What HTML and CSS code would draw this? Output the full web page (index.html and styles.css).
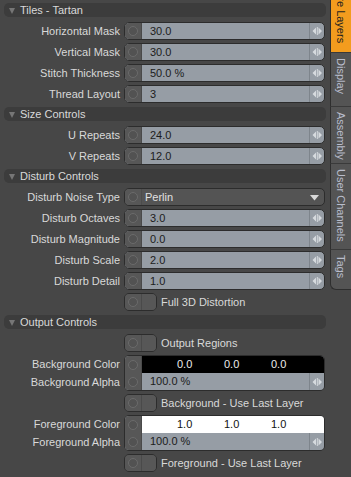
FILE: index.html
```html
<!DOCTYPE html>
<html>
<head>
<meta charset="utf-8">
<link rel="stylesheet" href="styles.css">
</head>
<body>
<div class="app">
  <div class="main">
    <section class="sec">
      <div class="hdr"><span class="tri"></span>Tiles - Tartan</div>
      <div class="rows">
        <div class="row"><span class="lbl">Horizontal Mask</span><div class="field"><span class="key"><i></i></span><span class="val">30.0</span><span class="spin"><svg width="11" height="10" viewBox="0 0 11 10"><path d="M0.5 5L4 1.5V8.5Z M6.5 1.5L10 5L6.5 8.5Z" fill="#d6dade"/><rect x="4.8" y="1" width="1" height="8" fill="#d6dade"/></svg></span></div></div>
        <div class="row"><span class="lbl">Vertical Mask</span><div class="field"><span class="key"><i></i></span><span class="val">30.0</span><span class="spin"><svg width="11" height="10" viewBox="0 0 11 10"><path d="M0.5 5L4 1.5V8.5Z M6.5 1.5L10 5L6.5 8.5Z" fill="#d6dade"/><rect x="4.8" y="1" width="1" height="8" fill="#d6dade"/></svg></span></div></div>
        <div class="row"><span class="lbl">Stitch Thickness</span><div class="field"><span class="key"><i></i></span><span class="val">50.0 %</span><span class="spin"><svg width="11" height="10" viewBox="0 0 11 10"><path d="M0.5 5L4 1.5V8.5Z M6.5 1.5L10 5L6.5 8.5Z" fill="#d6dade"/><rect x="4.8" y="1" width="1" height="8" fill="#d6dade"/></svg></span></div></div>
        <div class="row"><span class="lbl">Thread Layout</span><div class="field"><span class="key"><i></i></span><span class="val">3</span><span class="spin"><svg width="11" height="10" viewBox="0 0 11 10"><path d="M0.5 5L4 1.5V8.5Z M6.5 1.5L10 5L6.5 8.5Z" fill="#d6dade"/><rect x="4.8" y="1" width="1" height="8" fill="#d6dade"/></svg></span></div></div>
      </div>
    </section>

    <section class="sec">
      <div class="hdr"><span class="tri"></span>Size Controls</div>
      <div class="rows">
        <div class="row"><span class="lbl">U Repeats</span><div class="field"><span class="key"><i></i></span><span class="val">24.0</span><span class="spin"><svg width="11" height="10" viewBox="0 0 11 10"><path d="M0.5 5L4 1.5V8.5Z M6.5 1.5L10 5L6.5 8.5Z" fill="#d6dade"/><rect x="4.8" y="1" width="1" height="8" fill="#d6dade"/></svg></span></div></div>
        <div class="row"><span class="lbl">V Repeats</span><div class="field"><span class="key"><i></i></span><span class="val">12.0</span><span class="spin"><svg width="11" height="10" viewBox="0 0 11 10"><path d="M0.5 5L4 1.5V8.5Z M6.5 1.5L10 5L6.5 8.5Z" fill="#d6dade"/><rect x="4.8" y="1" width="1" height="8" fill="#d6dade"/></svg></span></div></div>
      </div>
    </section>

    <section class="sec">
      <div class="hdr"><span class="tri"></span>Disturb Controls</div>
      <div class="rows">
        <div class="row"><span class="lbl">Disturb Noise Type</span><div class="field dd"><span class="key"><i></i></span><span class="val">Perlin</span><span class="arrow"><svg width="9" height="6" viewBox="0 0 9 6"><path d="M0 0H9L4.5 5.5Z" fill="#d8d8d8"/></svg></span></div></div>
        <div class="row"><span class="lbl">Disturb Octaves</span><div class="field"><span class="key"><i></i></span><span class="val">3.0</span><span class="spin"><svg width="11" height="10" viewBox="0 0 11 10"><path d="M0.5 5L4 1.5V8.5Z M6.5 1.5L10 5L6.5 8.5Z" fill="#d6dade"/><rect x="4.8" y="1" width="1" height="8" fill="#d6dade"/></svg></span></div></div>
        <div class="row"><span class="lbl">Disturb Magnitude</span><div class="field"><span class="key"><i></i></span><span class="val">0.0</span><span class="spin"><svg width="11" height="10" viewBox="0 0 11 10"><path d="M0.5 5L4 1.5V8.5Z M6.5 1.5L10 5L6.5 8.5Z" fill="#d6dade"/><rect x="4.8" y="1" width="1" height="8" fill="#d6dade"/></svg></span></div></div>
        <div class="row"><span class="lbl">Disturb Scale</span><div class="field"><span class="key"><i></i></span><span class="val">2.0</span><span class="spin"><svg width="11" height="10" viewBox="0 0 11 10"><path d="M0.5 5L4 1.5V8.5Z M6.5 1.5L10 5L6.5 8.5Z" fill="#d6dade"/><rect x="4.8" y="1" width="1" height="8" fill="#d6dade"/></svg></span></div></div>
        <div class="row"><span class="lbl">Disturb Detail</span><div class="field"><span class="key"><i></i></span><span class="val">1.0</span><span class="spin"><svg width="11" height="10" viewBox="0 0 11 10"><path d="M0.5 5L4 1.5V8.5Z M6.5 1.5L10 5L6.5 8.5Z" fill="#d6dade"/><rect x="4.8" y="1" width="1" height="8" fill="#d6dade"/></svg></span></div></div>
        <div class="row"><span class="lbl"></span><div class="toggle"><span class="key"><i></i></span><span class="half"></span></div><span class="tlbl">Full 3D Distortion</span></div>
      </div>
    </section>

    <section class="sec">
      <div class="hdr"><span class="tri"></span>Output Controls</div>
      <div class="rows">
        <div class="row"><span class="lbl"></span><div class="toggle"><span class="key"><i></i></span><span class="half"></span></div><span class="tlbl">Output Regions</span></div>
        <div class="crow">
          <div class="clbls"><span class="lbl">Background Color</span><span class="lbl">Background Alpha</span></div>
          <div class="cbox">
            <div class="cline"><span class="key"><i></i></span><span class="swatch black"><span>0.0</span><span>0.0</span><span>0.0</span></span></div>
            <div class="cline"><span class="key"><i></i></span><span class="val">100.0 %</span><span class="spin"><svg width="11" height="10" viewBox="0 0 11 10"><path d="M0.5 5L4 1.5V8.5Z M6.5 1.5L10 5L6.5 8.5Z" fill="#d6dade"/><rect x="4.8" y="1" width="1" height="8" fill="#d6dade"/></svg></span></div>
          </div>
        </div>
        <div class="row"><span class="lbl"></span><div class="toggle"><span class="key"><i></i></span><span class="half"></span></div><span class="tlbl">Background - Use Last Layer</span></div>
        <div class="crow">
          <div class="clbls"><span class="lbl">Foreground Color</span><span class="lbl">Foreground Alpha</span></div>
          <div class="cbox">
            <div class="cline"><span class="key"><i></i></span><span class="swatch white"><span>1.0</span><span>1.0</span><span>1.0</span></span></div>
            <div class="cline"><span class="key"><i></i></span><span class="val">100.0 %</span><span class="spin"><svg width="11" height="10" viewBox="0 0 11 10"><path d="M0.5 5L4 1.5V8.5Z M6.5 1.5L10 5L6.5 8.5Z" fill="#d6dade"/><rect x="4.8" y="1" width="1" height="8" fill="#d6dade"/></svg></span></div>
          </div>
        </div>
        <div class="row"><span class="lbl"></span><div class="toggle"><span class="key"><i></i></span><span class="half"></span></div><span class="tlbl">Foreground - Use Last Layer</span></div>
      </div>
    </section>
  </div>

  <div class="tabs">
    <div class="tab active t1"><span>Texture Layers</span></div>
    <div class="tab t2"><span>Display</span></div>
    <div class="tab t3"><span>Assembly</span></div>
    <div class="tab t4"><span>User Channels</span></div>
    <div class="tab t5 last"><span>Tags</span></div>
  </div>
</div>
</body>
</html>
```

FILE: styles.css
```css
* { box-sizing: border-box; }
html, body {
  margin: 0;
  padding: 0;
  background: #474747;
  width: 351px;
  height: 477px;
  overflow: hidden;
}
body {
  font-family: "Liberation Sans", Arial, sans-serif;
  font-size: 11px;
  color: #d9d9d9;
}
.app {
  display: flex;
  height: 477px;
}
.main {
  width: 330px;
  padding: 3px 4px 0 4px;
  display: flex;
  flex-direction: column;
  gap: 4px;
}
.hdr {
  height: 14px;
  background: #3c3c3c;
  border-radius: 5px;
  display: flex;
  align-items: center;
  padding-left: 4px;
  color: #d9d9d9;
  line-height: 14px;
}
.tri {
  width: 0;
  height: 0;
  border-left: 3.5px solid transparent;
  border-right: 3.5px solid transparent;
  border-top: 6px solid #767676;
  margin: 1px 5px 0 1px;
}
.rows {
  display: flex;
  flex-direction: column;
  gap: 3px;
  padding-top: 5px;
}
.row {
  display: flex;
  align-items: center;
  height: 18px;
}
.lbl {
  width: 120px;
  flex: none;
  text-align: right;
  padding-right: 4px;
  white-space: nowrap;
  line-height: 18px;
  height: 18px;
}
.field {
  flex: 1;
  height: 18px;
  margin-right: 1px;
  display: flex;
  border: 1px solid #2c2c2c;
  border-radius: 5px;
  overflow: hidden;
  background: #969da5;
}
.key {
  width: 17px;
  flex: none;
  background: #575757;
  display: flex;
  align-items: center;
  justify-content: center;
  border-right: 1px solid #4a4a4a;
}
.key i {
  display: block;
  width: 10px;
  height: 10px;
  border-radius: 50%;
  border: 1px solid #6b6b6b;
  background: #525252;
}
.val {
  flex: 1;
  color: #1c1c1c;
  padding-left: 8px;
  line-height: 16px;
  white-space: nowrap;
}
.spin {
  width: 15px;
  flex: none;
  border-left: 1px solid #7e858c;
  display: flex;
  align-items: center;
  justify-content: center;
}
.dd { background: #545454; }
.dd .val { color: #e2e2e2; padding-left: 3px; }
.dd .key { border-right-color: #4c4c4c; }
.arrow {
  width: 20px;
  display: flex;
  align-items: center;
  justify-content: center;
  padding-top: 1px;
}
.toggle {
  width: 33px;
  height: 18px;
  flex: none;
  display: flex;
  border: 1px solid #2c2c2c;
  border-radius: 5px;
  overflow: hidden;
}
.toggle .half {
  flex: 1;
  background: #575757;
}
.tlbl {
  padding-left: 4px;
  white-space: nowrap;
}
.crow {
  display: flex;
  height: 36px;
}
.clbls {
  display: flex;
  flex-direction: column;
}
.cbox {
  flex: 1;
  margin-right: 1px;
  border: 1px solid #2c2c2c;
  border-radius: 5px;
  overflow: hidden;
  display: flex;
  flex-direction: column;
}
.cline {
  flex: 1;
  display: flex;
  background: #969da5;
}
.swatch {
  flex: 1;
  display: flex;
  padding-left: 35px;
  line-height: 17px;
}
.swatch span { width: 47px; }
.black { background: #000; color: #ececec; }
.white { background: #fff; color: #111; }

.tabs {
  width: 21px;
  display: flex;
  flex-direction: column;
  align-self: flex-start;
}
.tab {
  background: #545454;
  border-left: 1px solid #2e2e2e;
  border-bottom: 1px solid #3a3a3a;
  display: flex;
  flex-direction: column;
  align-items: center;
  overflow: hidden;
  color: #b9bdcc;
  padding-top: 5px;
}
.tab span {
  writing-mode: vertical-rl;
  flex: none;
  white-space: nowrap;
  line-height: 18px;
}
.t1 {
  height: 53px;
  background: #f39c1e;
  color: #1e1e1e;
  justify-content: flex-end;
  padding: 0 0 9px 0;
  border-left: 1px solid #2e2e2e;
}
.t2 { height: 54px; }
.t3 { height: 57px; }
.t4 { height: 86px; }
.t5 { height: 40px; border-bottom-left-radius: 6px; border-bottom: 1px solid #2e2e2e; }
```
